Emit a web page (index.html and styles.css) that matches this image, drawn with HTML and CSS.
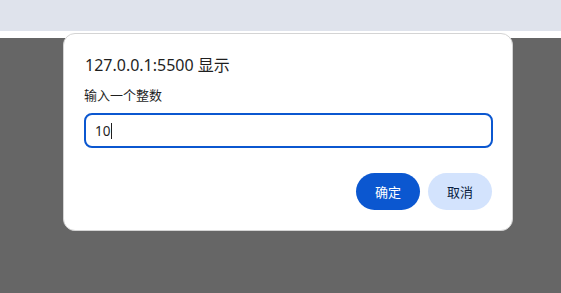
FILE: index.html
```html
<!DOCTYPE html>
<html lang="zh">
<head>
<meta charset="utf-8">
<link rel="stylesheet" href="styles.css">
</head>
<body>
<div class="topbar"></div>
<div class="strip"></div>
<div class="page"></div>
<div class="dialog">
  <div class="title">127.0.0.1:5500 显示</div>
  <div class="label">输入一个整数</div>
  <div class="input"><span class="value">10</span><span class="caret"></span></div>
  <div class="actions">
    <button class="btn primary">确定</button>
    <button class="btn secondary">取消</button>
  </div>
</div>
</body>
</html>
```
FILE: styles.css
```css
html, body {
  margin: 0;
  padding: 0;
  width: 561px;
  height: 293px;
  overflow: hidden;
  font-family: "Noto Sans", "Noto Sans CJK SC", sans-serif;
}
body {
  display: flex;
  flex-direction: column;
  position: relative;
}
.topbar {
  height: 31px;
  background: #dfe3ec;
}
.strip {
  height: 7px;
  background: #ffffff;
}
.page {
  flex: 1;
  background: #666666;
}
.dialog {
  position: absolute;
  left: 63px;
  top: 33px;
  width: 448px;
  height: 196px;
  background: #fff;
  border: 1px solid #d4d4d4;
  border-radius: 12px;
  display: flex;
  flex-direction: column;
}
.title {
  margin: 21px 0 0 21px;
  font-size: 16px;
  line-height: 20px;
  color: #1f1f1f;
}
.label {
  margin: 11px 0 0 20px;
  font-size: 13px;
  line-height: 18px;
  color: #1f1f1f;
}
.input {
  margin: 9px 0 0 20px;
  width: 409px;
  height: 35px;
  box-sizing: border-box;
  border: 2px solid #0b57d0;
  border-radius: 8px;
  display: flex;
  align-items: center;
  padding-left: 9px;
  font-size: 13.5px;
  color: #1f1f1f;
}
.caret {
  display: inline-block;
  width: 1px;
  height: 16px;
  background: #1f1f1f;
  margin-left: 1px;
}
.actions {
  display: flex;
  justify-content: flex-end;
  gap: 8px;
  margin: 25px 20px 0 0;
}
.btn {
  font-family: inherit;
  border: none;
  height: 37px;
  width: 64px;
  border-radius: 19px;
  font-size: 13px;
  padding: 0;
}
.primary {
  background: #0b57d0;
  color: #fff;
}
.secondary {
  background: #d3e3fd;
  color: #0a1d3f;
}
```
